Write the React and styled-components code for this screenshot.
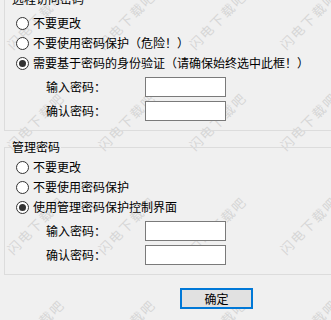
import React from "react";
import styled, { createGlobalStyle } from "styled-components";

const GlobalStyle = createGlobalStyle`
  html, body {
    margin: 0;
    padding: 0;
    background: #f0f0f0;
    overflow: hidden;
  }
  body {
    font-family: "Noto Sans CJK SC", "Microsoft YaHei", sans-serif;
    font-size: 12px;
    color: #000;
  }
`;

const Page = styled.div`
  position: relative;
  width: 331px;
  height: 320px;
  overflow: hidden;
  padding-left: 4px;
  box-sizing: border-box;
`;

const Watermarks = styled.div`
  position: absolute;
  inset: 0;
  z-index: 0;
  pointer-events: none;
`;

const Mark = styled.span`
  position: absolute;
  white-space: nowrap;
  font-size: 13px;
  line-height: 13px;
  letter-spacing: 2px;
  color: #d6d6d6;
  transform: rotate(-45deg);
  transform-origin: left center;
`;

const Content = styled.div`
  position: relative;
  z-index: 1;
`;

const Group = styled.fieldset`
  margin: ${(p) => p.$top}px -30px 0 0;
  padding: ${(p) => p.$padTop}px 0 9px 0;
  border: 1px solid #dcdcdc;
  min-width: 0;
`;

const Legend = styled.legend`
  margin-left: 6px;
  padding: 0 1px;
  font-size: 12px;
  line-height: 14px;
`;

const RadioRow = styled.label`
  display: flex;
  align-items: center;
  gap: 4px;
  height: 20px;
  padding-left: 11px;
  line-height: 14px;
`;

const RadioCircle = styled.span`
  width: 13px;
  height: 13px;
  box-sizing: border-box;
  border: 1px solid #333;
  border-radius: 50%;
  background: #fff;
  display: flex;
  align-items: center;
  justify-content: center;
  flex: none;
  &::after {
    content: "";
    width: 7px;
    height: 7px;
    border-radius: 50%;
    background: #333;
    display: ${(p) => (p.$checked ? "block" : "none")};
  }
`;

const FieldRow = styled.div`
  display: grid;
  grid-template-columns: 99px 81px;
  align-items: center;
  height: 20px;
  padding-left: 41px;
  margin-top: 4px;
`;

const FieldLabel = styled.span`
  line-height: 14px;
`;

const TextBox = styled.input`
  width: 81px;
  height: 20px;
  box-sizing: border-box;
  border: 1px solid #7a7a7a;
  background: #fff;
  margin: 0;
  padding: 0 2px;
  outline: none;
`;

const ButtonRow = styled.div`
  padding-left: 176px;
  margin-top: 13px;
`;

const Button = styled.button`
  width: 73px;
  height: 21px;
  box-sizing: border-box;
  border: 2px solid #0078d7;
  background: #e1e1e1;
  font-family: inherit;
  font-size: 12px;
  color: #000;
  padding: 0;
  margin: 0;
  display: flex;
  align-items: center;
  justify-content: center;
`;

const marks = [];
[42, 143, 247, 350].forEach((y) => {
  [14, 105, 196, 287].forEach((x) => {
    marks.push({ x, y });
  });
});

function Radio({ checked, children }) {
  return (
    <RadioRow>
      <RadioCircle $checked={checked} />
      <span>{children}</span>
    </RadioRow>
  );
}

function Field({ label }) {
  return (
    <FieldRow>
      <FieldLabel>{label}</FieldLabel>
      <TextBox type="password" />
    </FieldRow>
  );
}

export default function App() {
  return (
    <>
      <GlobalStyle />
      <Page>
        <Watermarks>
          {marks.map((m, i) => (
            <Mark key={i} style={{ left: m.x - 5, top: m.y - 2 }}>
              闪电下载吧
            </Mark>
          ))}
        </Watermarks>
        <Content>
          <Group $top={-8} $padTop={7}>
            <Legend>远程访问密码</Legend>
            <Radio>不要更改</Radio>
            <Radio>不要使用密码保护（危险！）</Radio>
            <Radio checked>需要基于密码的身份验证（请确保始终选中此框！）</Radio>
            <Field label="输入密码：" />
            <Field label="确认密码：" />
          </Group>
          <Group $top={9} $padTop={3}>
            <Legend>管理密码</Legend>
            <Radio>不要更改</Radio>
            <Radio>不要使用密码保护</Radio>
            <Radio checked>使用管理密码保护控制界面</Radio>
            <Field label="输入密码：" />
            <Field label="确认密码：" />
          </Group>
          <ButtonRow>
            <Button>确定</Button>
          </ButtonRow>
        </Content>
      </Page>
    </>
  );
}
